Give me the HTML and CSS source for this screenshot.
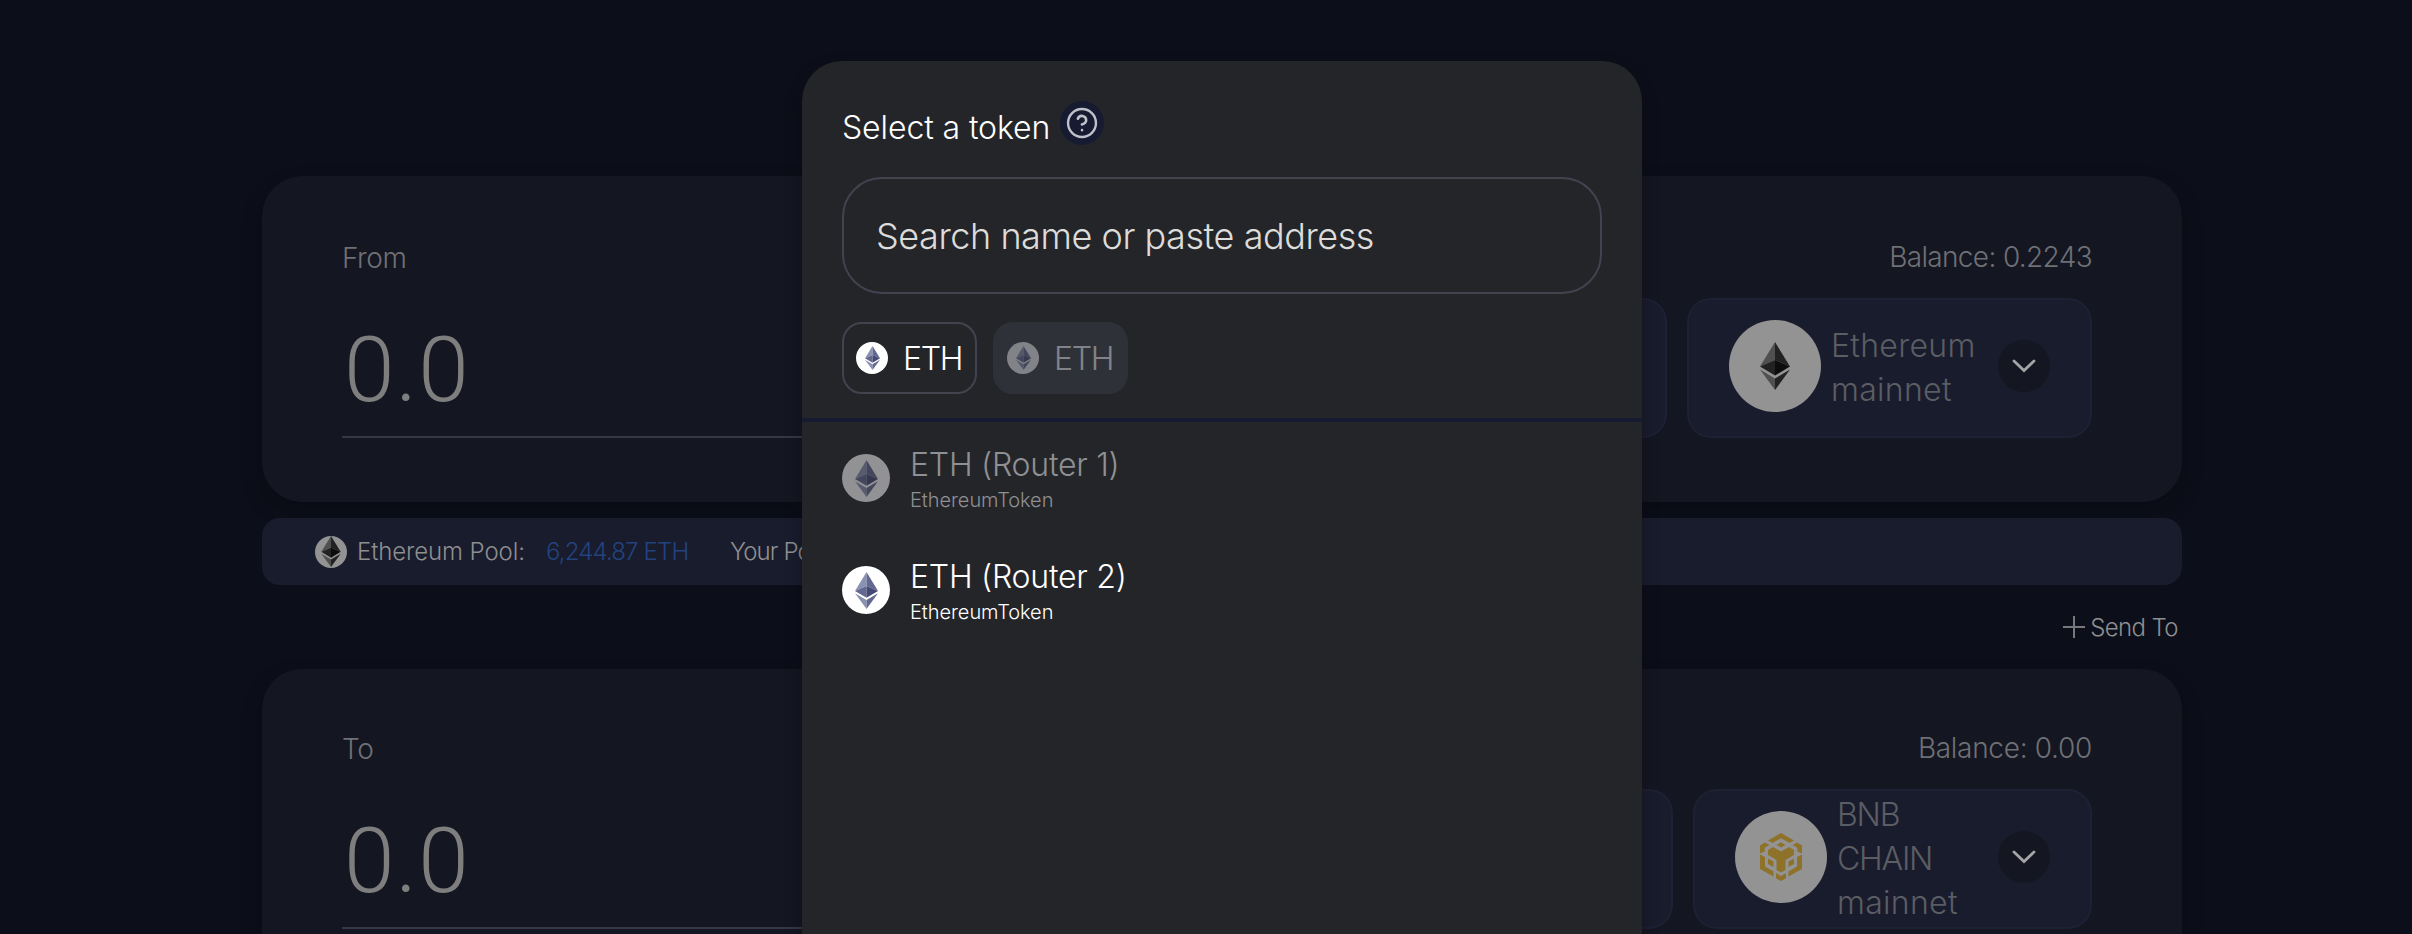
FILE: index.html
```html
<!DOCTYPE html>
<html lang="en">
<head>
<meta charset="utf-8">
<title>Bridge</title>
<link rel="stylesheet" href="styles.css">
</head>
<body>
<svg class="defs" width="0" height="0">
  <symbol id="eth" viewBox="0 0 30 48">
    <path d="M15 0 0 24.5 15 18z" fill="var(--a)"/>
    <path d="M15 0v18l15 6.5z" fill="var(--b)"/>
    <path d="M0 24.5 15 18v15.500z" fill="var(--b)"/>
    <path d="M30 24.5 15 18v15.500z" fill="var(--c)"/>
    <path d="M0 27.500 15 36.500V48z" fill="var(--a)"/>
    <path d="M30 27.500 15 36.500V48z" fill="var(--b)"/>
  </symbol>
  <symbol id="bnb" viewBox="0 0 42 48">
    <g fill="#8f722a">
      <path d="M21 0 34 7.400 29.500 10 21 5.200 12.500 10 8 7.400z"/>
      <path d="M21 9.200 25.500 12 21 14.500 16.500 12z"/>
      <path d="M5 9.500 9.500 12 4.700 14.800V18.500L0 20.500V12.500z"/>
      <path d="M37 9.500 32.500 12 37.300 14.800V18.500L42 20.500V12.500z"/>
      <path d="M13 14 21 18.500 29 14 34 17V22L25.500 27V37L21 39.500 16.500 37V27L8 22V17z"/>
      <path d="M0 21.500 5 24V33.500L13.500 38.500V43.500L0 36z"/>
      <path d="M42 21.500 37 24V33.500L28.500 38.500V43.500L42 36z"/>
      <path d="M8 25.500 13.500 28.500V34L8 31z"/>
      <path d="M34 25.500 28.500 28.500V34L34 31z"/>
      <path d="M16 40 21 43 26 40V45.300L21 48 16 45.300z"/>
    </g>
  </symbol>
</svg>
<main class="page">
  <section class="card">
    <div class="amount">
      <div class="label from">From</div>
      <div class="value">0.0</div>
    </div>
    <div class="side">
      <div class="label balance b1">Balance: 0.2243</div>
      <div class="pickers">
        <div class="picker tokenbox"></div>
        <div class="picker net">
          <span class="coin"><svg class="dark" width="30" height="48"><use href="#eth"/></svg></span>
          <span class="netname">Ethereum<br>mainnet</span>
          <span class="chev"><svg width="24" height="14" viewBox="0 0 24 14"><path d="M2 2l10 9.500L22 2"/></svg></span>
        </div>
      </div>
    </div>
  </section>
  <section class="pool">
    <span class="poolcoin"><svg class="dark" width="20" height="31"><use href="#eth"/></svg></span>
    <span class="p1">Ethereum Pool:</span>
    <span class="p2">6,244.87 ETH</span>
    <span class="p3">Your Pool Share:</span>
  </section>
  <div class="sendrow">
    <svg width="22" height="22" viewBox="0 0 22 22"><path d="M11 0v22M0 11h22"/></svg>
    <span class="send">Send To</span>
  </div>
  <section class="card second">
    <div class="amount">
      <div class="label to">To</div>
      <div class="value">0.0</div>
    </div>
    <div class="side">
      <div class="label balance b2">Balance: 0.00</div>
      <div class="pickers">
        <div class="picker tokenbox"></div>
        <div class="picker net bnb">
          <span class="coin"><svg width="42" height="48"><use href="#bnb"/></svg></span>
          <span class="netname"><span class="tight">BNB</span><br><span class="tight">CHAIN</span><br>mainnet</span>
          <span class="chev"><svg width="24" height="14" viewBox="0 0 24 14"><path d="M2 2l10 9.500L22 2"/></svg></span>
        </div>
      </div>
    </div>
  </section>
</main>
<div class="modal">
  <header class="top">
    <div class="title"><span class="titletext">Select a token</span>
      <span class="help"><svg width="32" height="32" viewBox="0 0 24 24"><circle cx="12" cy="12" r="9.300"/><path d="M9.090 9a3 3 0 0 1 5.830 1c0 2-3 3-3 3M12 17h.01"/></svg></span>
    </div>
    <div class="search"><span class="placeholder">Search name or paste address</span></div>
    <div class="chips">
      <div class="chip on"><span class="disc"><svg class="blue" width="15" height="24"><use href="#eth"/></svg></span><span class="sym">ETH</span></div>
      <div class="chip off"><span class="chipin"><span class="disc"><svg class="blue" width="15" height="24"><use href="#eth"/></svg></span><span class="sym">ETH</span></span></div>
    </div>
  </header>
  <div class="row dim">
    <span class="big"><svg class="blue" width="23" height="37"><use href="#eth"/></svg></span>
    <div><div class="name n1">ETH (Router 1)</div><div class="sub">EthereumToken</div></div>
  </div>
  <div class="row">
    <span class="big"><svg class="blue" width="23" height="37"><use href="#eth"/></svg></span>
    <div><div class="name n2">ETH (Router 2)</div><div class="sub">EthereumToken</div></div>
  </div>
</div>
</body>
</html>
```
FILE: styles.css
```css
* { box-sizing: border-box; }
body { margin: 0; height: 934px; overflow: hidden; background: #0c0e19; font-family: Inter, sans-serif; font-weight: 330; color: #fff; }
.defs { position: absolute; }
span, .label, .name, .sub, .value { white-space: nowrap; }
.page { padding: 176px 230px 0 262px; height: 934px; overflow: hidden; }
.card { height: 326px; border-radius: 40px; background: #141621; padding: 62px 90px 0 80px; display: flex; justify-content: space-between; box-shadow: 0 10px 20px rgba(8, 8, 14, .3); }
.card.second { height: 330px; padding-top: 60px; }
.amount { width: 900px; height: 200px; border-bottom: 2px solid #363845; color: #7e7e7e; }
.label { font-size: 28px; line-height: 40px; color: #6f7075; letter-spacing: -.4px; }
.value { font-family: Roboto, sans-serif; font-size: 91px; font-weight: 350; line-height: 110px; margin-top: 37px; padding-left: 2px; letter-spacing: 1px; color: #7e7e7e; }
.side { display: flex; flex-direction: column; align-items: flex-end; }
.balance { height: 60px; line-height: 38px; }
.b1 { letter-spacing: -.65px; }
.b2 { letter-spacing: -.3px; }
.pickers { display: flex; gap: 20px; }
.picker { height: 140px; border: 2px solid #1e2034; background: #191c2c; border-radius: 24px; }
.tokenbox { width: 300px; }
.net { width: 405px; display: flex; align-items: center; padding: 0 40px; }
.net.bnb { width: 399px; }
.coin { width: 92px; height: 92px; border-radius: 50%; background: #939393; display: flex; align-items: center; justify-content: center; margin-top: -4px; }
.netname { font-size: 32px; line-height: 44px; margin-left: 10px; color: #5b5d64; letter-spacing: .3px; }
.tight { letter-spacing: -1.2px; }
.chev { width: 52px; height: 52px; border-radius: 50%; background: #141621; display: flex; align-items: center; justify-content: center; margin: -4px 0 0 auto; }
.chev svg { fill: none; stroke: #a5a5a7; stroke-width: 2.8; stroke-linecap: round; }
.dark { --a: #505050; --b: #222; --c: #0c0c0c; }
.blue { --a: #8a92b2; --b: #62688f; --c: #454a75; }
.pool { margin-top: 16px; height: 67px; border-radius: 18px; background: #191c2c; display: flex; align-items: center; padding-left: 53px; font-size: 24px; letter-spacing: -.1px; color: #8f8f90; }
.poolcoin { width: 32px; height: 32px; border-radius: 50%; background: #939393; display: flex; align-items: center; justify-content: center; margin-right: 10px; }
.p1 { width: 189px; }
.p2 { width: 184px; color: #23427f; letter-spacing: -.85px; }
.p3 { letter-spacing: -.9px; }
.sendrow { height: 84px; display: flex; align-items: center; justify-content: flex-end; gap: 5px; padding-right: 4px; font-size: 24px; letter-spacing: -.6px; color: #8f8f90; }
.sendrow svg { stroke: #77777c; stroke-width: 2; }
.modal { position: absolute; left: 802px; top: 61px; width: 840px; height: 873px; background: #242529; border-radius: 40px 40px 0 0; overflow: hidden; box-shadow: 0 8px 16px rgba(10, 10, 16, .4); }
.top { height: 361px; border-bottom: 4px solid #161b31; padding: 40px 40px 0; }
.title { display: flex; height: 45px; font-size: 32px; line-height: 54px; letter-spacing: -.1px; }
.help { width: 44px; height: 44px; border-radius: 50%; background: #161b31; display: flex; align-items: center; justify-content: center; margin-left: 8px; }
.help svg { width: 36px; height: 36px; fill: none; stroke: #bfc0c9; stroke-width: 1.6; stroke-linecap: round; stroke-linejoin: round; }
.help path { stroke-width: 1.8; transform: translate(12px, 12px) scale(.95) translate(-12px, -12px); }
.titletext { width: 210px; }
.search { margin-top: 31px; height: 117px; border: 2px solid #434350; border-radius: 40px; padding-left: 32px; display: flex; align-items: center; font-size: 36px; letter-spacing: -.45px; color: #dcdcda; }
.chips { display: flex; gap: 16px; margin-top: 28px; }
.chip { width: 135px; height: 72px; border-radius: 20px; border: 2px solid #434350; padding-left: 12px; display: flex; align-items: center; font-size: 32px; letter-spacing: -1.3px; }
.chip.off { background: #2e3138; border-color: #2e3138; }
.chipin { display: flex; align-items: center; opacity: .4; }
.disc { width: 32px; height: 32px; border-radius: 50%; background: #fff; display: flex; align-items: center; justify-content: center; }
.sym { margin-left: 15px; }
.row { display: flex; height: 112px; padding: 32px 40px 0; }
.big { width: 48px; height: 48px; border-radius: 50%; background: #fff; display: flex; align-items: center; justify-content: center; margin-right: 20px; }
.dim { color: #8f9093; }
.dim .big { opacity: .5; }
.name { font-size: 32px; line-height: 44px; margin-top: -11px; letter-spacing: -.25px; }
.sub { font-size: 20px; line-height: 27px; letter-spacing: -.05px; }
```
